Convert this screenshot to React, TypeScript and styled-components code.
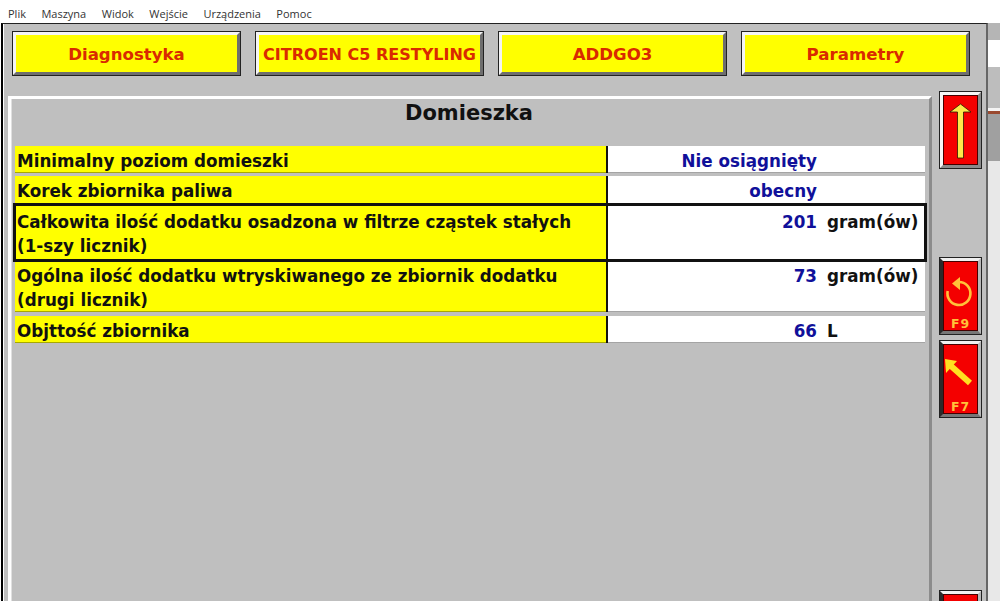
import React from "react";
import styled, { createGlobalStyle } from "styled-components";

const Global = createGlobalStyle`
  html, body { margin: 0; padding: 0; background: #fff; }
  body { width: 1000px; height: 601px; overflow: hidden; font-family: "DejaVu Sans", "Liberation Sans", sans-serif; }
  #root { width: 1000px; height: 601px; }
`;

const Page = styled.div`
  width: 1000px;
  height: 601px;
  display: flex;
  flex-direction: column;
  overflow: hidden;
  background: #fff;
`;

const MenuBar = styled.nav`
  flex: 0 0 23px;
  display: flex;
  align-items: center;
  gap: 15.5px;
  padding: 4px 0 0 8px;
  box-sizing: border-box;
  font: 11px "Open Sans", "Noto Sans", sans-serif;
  color: #333;
`;

const Desktop = styled.div`
  flex: 1;
  min-height: 0;
  display: flex;
  padding-left: 1px;
`;

const Window = styled.main`
  width: 987px;
  flex: none;
  box-sizing: border-box;
  border-left: 2px solid #000;
  border-top: 1px solid #222;
  border-right: 2px solid #666;
  background: #c0c0c0;
  box-shadow: inset 1px 0 0 #fff;
  display: flex;
  flex-direction: column;
`;

const Toolbar = styled.div`
  display: grid;
  grid-template-columns: repeat(4, 229px);
  gap: 14px;
  padding: 7px 0 0 9px;
`;

const TopButton = styled.button<{ $small?: boolean }>`
  height: 45px;
  padding: 1px 0 0;
  box-sizing: border-box;
  border: 4px solid;
  border-color: #f4f4f4 #6e6e6e #6e6e6e #f4f4f4;
  outline: 1px solid #222;
  outline-offset: -1px;
  background: #ffff00;
  color: #d92a00;
  font-family: "DejaVu Sans", sans-serif;
  font-weight: 700;
  font-size: ${(p) => (p.$small ? "16px" : "16.6px")};
  white-space: nowrap;
`;

const Workspace = styled.div`
  flex: 1;
  min-height: 0;
  display: flex;
  margin-top: 15px;
  padding-left: 5px;
  gap: 7px;
`;

const Panel = styled.section`
  width: 924px;
  flex: none;
  box-sizing: border-box;
  margin-top: 5px;
  border-top: 3px solid #fff;
  border-left: 3px solid #fff;
  border-right: 3px solid #8c8c8c;
  background: #bfbfbf;
  display: flex;
  flex-direction: column;
  padding: 0 4px;
  box-shadow: inset 1px 0 0 #e0e0e0;
`;

const Title = styled.h1`
  margin: 0;
  height: 47px;
  box-sizing: border-box;
  font-size: 21px;
  line-height: 28px;
  font-weight: 700;
  color: #111;
  text-align: center;
  padding-right: 2px;
`;

const Rows = styled.div`
  display: flex;
  flex-direction: column;
  width: 910px;
`;

const Row = styled.div<{ $height: number; $after: number; $selected?: boolean }>`
  height: ${(p) => p.$height}px;
  margin-bottom: ${(p) => p.$after}px;
  flex: none;
  display: grid;
  grid-template-columns: 591px 2px 1fr;
  box-sizing: border-box;
  background: #fff;
  box-shadow: inset 0 -1px 0 #a4a4a4;
  outline: ${(p) => (p.$selected ? "3px solid #111" : "none")};
  outline-offset: -1px;
  position: relative;
  z-index: ${(p) => (p.$selected ? 1 : 0)};
`;

const Label = styled.div<{ $pad: number }>`
  background: #ffff00;
  box-shadow: inset 0 -1px 0 #a8a800;
  padding: ${(p) => p.$pad}px 0 0 2px;
  font-size: 16.75px;
  font-weight: 700;
  line-height: 24px;
  color: #111;
  white-space: pre-line;
`;

const Divider = styled.div`
  background: #111;
`;

const Value = styled.div<{ $pad: number }>`
  display: grid;
  grid-template-columns: 209px 1fr;
  align-items: start;
  padding-top: ${(p) => p.$pad}px;
  font-size: 16.75px;
  font-weight: 700;
  line-height: 24px;
`;

const Amount = styled.span`
  text-align: right;
  color: #10109a;
  white-space: nowrap;
`;

const Unit = styled.span`
  padding-left: 10px;
  color: #111;
  white-space: nowrap;
`;

const Side = styled.aside`
  flex: 1;
  display: flex;
  flex-direction: column;
`;

const SideButton = styled.button<{ $after?: number; $dim?: boolean }>`
  width: 43px;
  height: 78px;
  flex: none;
  padding: 0;
  box-sizing: border-box;
  border: 4px solid;
  border-color: ${(p) =>
    p.$dim ? "#f0f0f0 #b8b8b8 #777 #2a2a2a" : "#f6f6f6 #8a8a8a #8a8a8a #f6f6f6"};
  outline: 1px solid #222;
  outline-offset: -1px;
  background: #f40000;
  box-shadow: inset 0 0 0 1px #400;
  margin-bottom: ${(p) => p.$after ?? 0}px;
  display: flex;
  flex-direction: column;
  align-items: center;
  justify-content: flex-start;
  overflow: hidden;
`;

const KeyLabel = styled.span`
  font-family: "DejaVu Sans", sans-serif;
  font-size: 12.5px;
  line-height: 12px;
  font-weight: 700;
  color: #ffc23a;
  letter-spacing: 0.8px;
`;

const Icon = styled.svg<{ $tall?: boolean }>`
  display: block;
  width: 35px;
  height: ${(p) => (p.$tall ? 70 : 57)}px;
  flex: none;
`;

const Outside = styled.div`
  flex: 1;
  display: flex;
  flex-direction: column;
`;

const Band = styled.div<{ $height?: number; $color: string }>`
  flex: ${(p) => (p.$height ? `0 0 ${p.$height}px` : "1")};
  background: ${(p) => p.$color};
`;

const menu = ["Plik", "Maszyna", "Widok", "Wejście", "Urządzenia", "Pomoc"];
const tabs = [
  { text: "Diagnostyka" },
  { text: "CITROEN C5 RESTYLING", small: true },
  { text: "ADDGO3" },
  { text: "Parametry" },
];
const rows = [
  { label: "Minimalny poziom domieszki", amount: "Nie osiągnięty", height: 27, after: 3, pad: 3 },
  { label: "Korek zbiornika paliwa", amount: "obecny", height: 28, after: 1, pad: 3 },
  {
    label: "Całkowita ilość dodatku osadzona w filtrze cząstek stałych\n(1-szy licznik)",
    amount: "201",
    unit: "gram(ów)",
    height: 55,
    after: 2,
    pad: 5,
    selected: true,
  },
  {
    label: "Ogólna ilość dodatku wtryskiwanego ze zbiornik dodatku\n(drugi licznik)",
    amount: "73",
    unit: "gram(ów)",
    height: 50,
    after: 4,
    pad: 2,
  },
  { label: "Objttość zbiornika", amount: "66", unit: "L", height: 27, after: 0, pad: 3 },
];

export default function App() {
  return (
    <Page>
      <Global />
      <MenuBar>
        {menu.map((m) => (
          <span key={m}>{m}</span>
        ))}
      </MenuBar>
      <Desktop>
        <Window>
          <Toolbar>
            {tabs.map((t) => (
              <TopButton key={t.text} $small={t.small}>
                {t.text}
              </TopButton>
            ))}
          </Toolbar>
          <Workspace>
            <Panel>
              <Title>Domieszka</Title>
              <Rows>
                {rows.map((r) => (
                  <Row key={r.label} $height={r.height} $after={r.after} $selected={r.selected}>
                    <Label $pad={r.pad}>{r.label}</Label>
                    <Divider />
                    <Value $pad={r.pad}>
                      <Amount>{r.amount}</Amount>
                      {r.unit && <Unit>{r.unit}</Unit>}
                    </Value>
                  </Row>
                ))}
              </Rows>
            </Panel>
            <Side>
              <SideButton $after={88}>
                <Icon $tall viewBox="0 0 35 70">
                  <path
                    d="M17.5 9 L28 17 L20.5 17 L20.5 63 L14.5 63 L14.5 17 L7 17 Z"
                    fill="#ffe94a"
                    stroke="#2a1a00"
                    strokeWidth="0.8"
                  />
                </Icon>
              </SideButton>
              <SideButton $after={5} $dim>
                <Icon viewBox="0 0 35 57">
                  <path
                    d="M16 21 A11.5 11.5 0 1 1 4.7 30"
                    fill="none"
                    stroke="#ffc23a"
                    strokeWidth="2.6"
                  />
                  <path d="M9 22.5 L17 16 L17 29 Z" fill="#ffc23a" />
                </Icon>
                <KeyLabel>F9</KeyLabel>
              </SideButton>
              <SideButton $after={172} $dim>
                <Icon viewBox="0 0 35 57">
                  <path d="M2 15 L14 17 L3 29 Z" fill="#ffe020" />
                  <path d="M8 22 L27 39" stroke="#ffe020" strokeWidth="6" fill="none" />
                </Icon>
                <KeyLabel>F7</KeyLabel>
              </SideButton>
              <SideButton $dim />
            </Side>
          </Workspace>
        </Window>
        <Outside>
          <Band $height={17} $color="#b5b5b5" />
          <Band $height={27} $color="#ffffff" />
          <Band $height={41} $color="#bdbdbd" />
          <Band $height={3} $color="#f4f4f4" />
          <Band $height={3} $color="#9a4a30" />
          <Band $height={47} $color="#a0a0a0" />
          <Band $color="#e8e8e8" />
        </Outside>
      </Desktop>
    </Page>
  );
}
